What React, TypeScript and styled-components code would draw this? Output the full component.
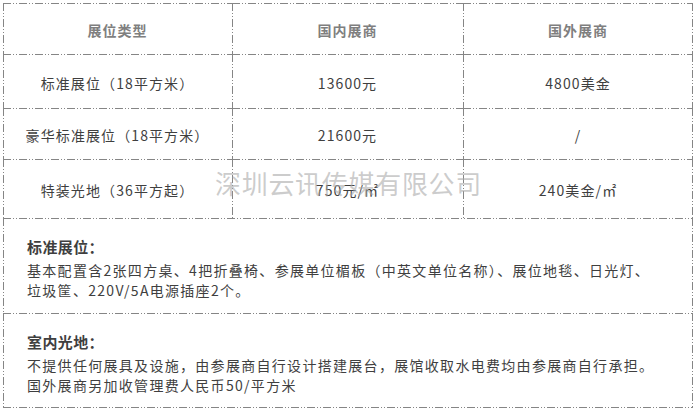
import React from "react";
import styled, { createGlobalStyle, css } from "styled-components";

const GlobalStyle = createGlobalStyle`
  html, body { margin: 0; padding: 0; background: #ffffff; }
  body { font-family: "Noto Sans CJK SC", "Noto Sans", sans-serif; }
`;

const LINE = "#858585";
const hPattern = `repeating-linear-gradient(90deg, ${LINE} 0 8px, transparent 8px 10px, ${LINE} 10px 11px, transparent 11px 13px, ${LINE} 13px 14px, transparent 14px 16px)`;
const vPattern = `repeating-linear-gradient(180deg, ${LINE} 0 8px, transparent 8px 10px, ${LINE} 10px 11px, transparent 11px 13px, ${LINE} 13px 14px, transparent 14px 16px)`;

const edge = (side: "top" | "left" | "right" | "bottom") => {
  if (side === "top") return `${hPattern} left top / 100% 1px no-repeat`;
  if (side === "bottom") return `${hPattern} left bottom / 100% 1px no-repeat`;
  if (side === "left") return `${vPattern} left top / 1px 100% no-repeat`;
  return `${vPattern} right top / 1px 100% no-repeat`;
};

const Page = styled.div`
  position: relative;
  padding: 3px 0 0 3px;
  width: 690px;
`;

const Table = styled.div`
  display: grid;
  grid-template-columns: 229px 231px 230px;
`;

const Cell = styled.div<{ $h: number; $last?: boolean; $head?: boolean }>`
  height: ${(p) => p.$h}px;
  display: flex;
  align-items: center;
  justify-content: center;
  padding-top: 3px;
  box-sizing: border-box;
  background: ${(p) =>
    [edge("top"), edge("left"), ...(p.$last ? [edge("right")] : [])].join(", ")};
  font-size: 14px;
  letter-spacing: 1.1px;
  color: #3f3f3f;
  ${(p) =>
    p.$head &&
    css`
      font-weight: 700;
      color: #7f7f7f;
      letter-spacing: 1px;
    `}
`;

const Section = styled.div<{ $bottom?: boolean }>`
  height: 95px;
  box-sizing: border-box;
  padding: 16px 0 0 24px;
  background: ${(p) =>
    [edge("top"), edge("left"), edge("right"), ...(p.$bottom ? [edge("bottom")] : [])].join(", ")};
  color: #3f3f3f;
`;

const SectionTitle = styled.div`
  font-size: 15px;
  font-weight: 700;
  line-height: 26px;
  letter-spacing: 0.4px;
`;

const SectionText = styled.div`
  font-size: 14px;
  line-height: 20px;
  letter-spacing: 1.3px;
`;

const Watermark = styled.div`
  position: absolute;
  left: 215px;
  top: 166px;
  font-size: 26px;
  line-height: 34px;
  letter-spacing: 0.7px;
  color: rgba(170, 170, 170, 0.6);
  pointer-events: none;
  white-space: nowrap;
`;

const rows: { h: number; cells: string[] }[] = [
  { h: 54, cells: ["标准展位（18平方米）", "13600元", "4800美金"] },
  { h: 51, cells: ["豪华标准展位（18平方米）", "21600元", "/"] },
  { h: 59, cells: ["特装光地（36平方起）", "750元/㎡", "240美金/㎡"] },
];

const headers = ["展位类型", "国内展商", "国外展商"];

export default function App() {
  return (
    <>
      <GlobalStyle />
      <Page>
        <Table>
          {headers.map((t, i) => (
            <Cell key={t} $h={51} $head $last={i === 2}>
              {t}
            </Cell>
          ))}
          {rows.map((r) =>
            r.cells.map((c, i) => (
              <Cell key={r.cells[0] + i} $h={r.h} $last={i === 2}>
                {c}
              </Cell>
            ))
          )}
        </Table>
        <Section>
          <SectionTitle>标准展位：</SectionTitle>
          <SectionText>
            基本配置含2张四方桌、4把折叠椅、参展单位楣板（中英文单位名称）、展位地毯、日光灯、
            <br />
            垃圾筐、220V/5A电源插座2个。
          </SectionText>
        </Section>
        <Section $bottom>
          <SectionTitle>室内光地：</SectionTitle>
          <SectionText>
            不提供任何展具及设施，由参展商自行设计搭建展台，展馆收取水电费均由参展商自行承担。
            <br />
            国外展商另加收管理费人民币50/平方米
          </SectionText>
        </Section>
        <Watermark>深圳云讯传媒有限公司</Watermark>
      </Page>
    </>
  );
}
